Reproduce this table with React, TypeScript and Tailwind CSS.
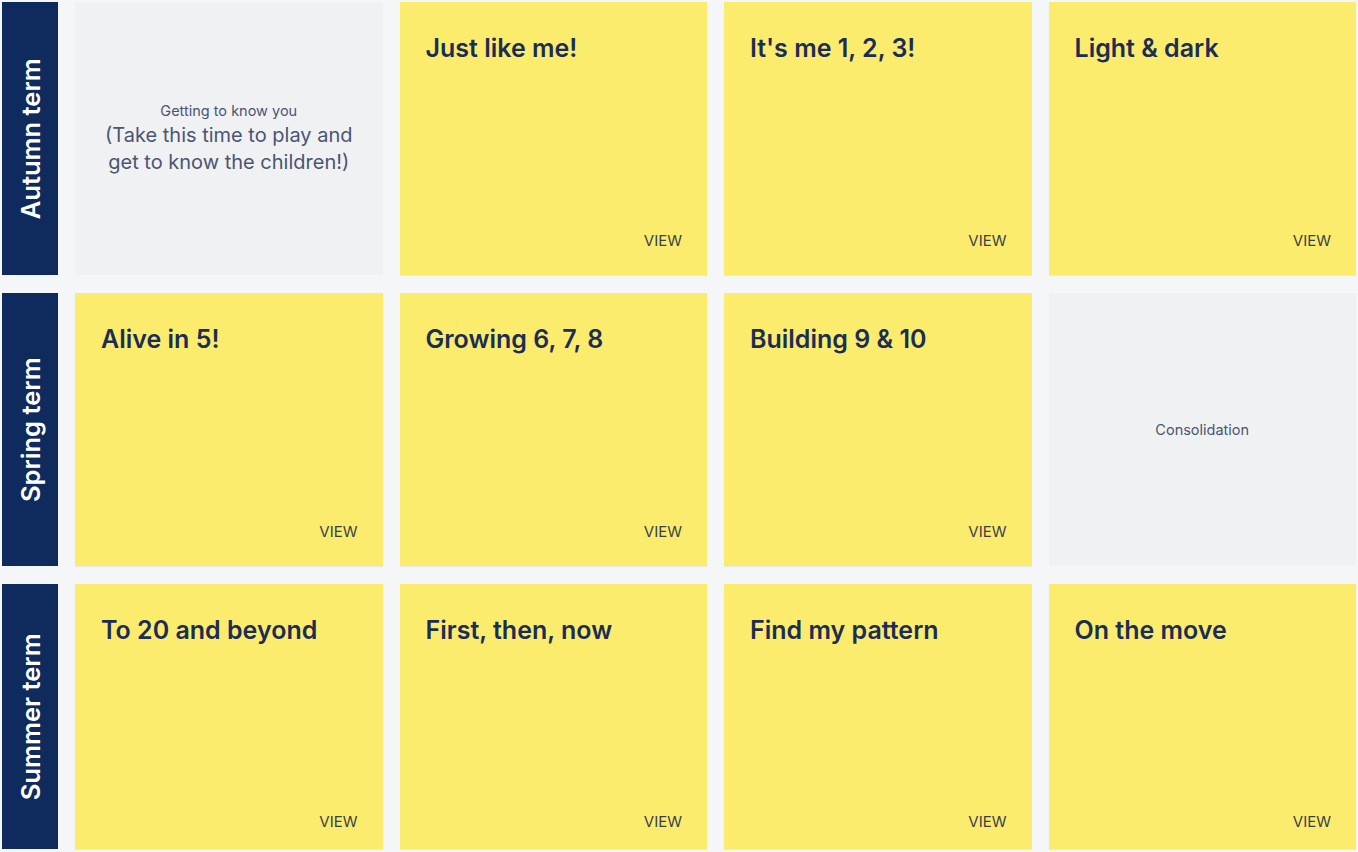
import React from "react";

type Card =
  | { kind: "unit"; title: string }
  | { kind: "note"; small: string; big?: string };

const rows: { term: string; cards: Card[] }[] = [
  {
    term: "Autumn term",
    cards: [
      { kind: "note", small: "Getting to know you", big: "(Take this time to play and get to know the children!)" },
      { kind: "unit", title: "Just like me!" },
      { kind: "unit", title: "It's me 1, 2, 3!" },
      { kind: "unit", title: "Light & dark" },
    ],
  },
  {
    term: "Spring term",
    cards: [
      { kind: "unit", title: "Alive in 5!" },
      { kind: "unit", title: "Growing 6, 7, 8" },
      { kind: "unit", title: "Building 9 & 10" },
      { kind: "note", small: "Consolidation" },
    ],
  },
  {
    term: "Summer term",
    cards: [
      { kind: "unit", title: "To 20 and beyond" },
      { kind: "unit", title: "First, then, now" },
      { kind: "unit", title: "Find my pattern" },
      { kind: "unit", title: "On the move" },
    ],
  },
];

export default function App() {
  return (
    <div
      className="w-[1358px] h-[852px] overflow-hidden bg-[#f4f6f8] px-[2px] pt-[2px] flex flex-col gap-[18px]"
      style={{ fontFamily: "Inter, 'Open Sans', sans-serif" }}
    >
      {rows.map((row, ri) => {
        const last = ri === 2;
        return (
          <div
            key={ri}
            className={`grid grid-cols-[56px_repeat(4,minmax(0,1fr))] gap-[17px] shrink-0 ${last ? "h-[265px]" : "h-[273px]"}`}
          >
            <div className="bg-[#0f2a5c] flex items-center justify-center">
              <span className="-rotate-90 whitespace-nowrap text-white font-semibold text-[25.5px] leading-none">
                {row.term}
              </span>
            </div>
            {row.cards.map((c, ci) =>
              c.kind === "unit" ? (
                <div
                  key={ci}
                  className={`bg-[#fcec6e] flex flex-col justify-between pl-[26px] pr-[25px] pt-[30px] shadow-[0_1px_1px_rgba(0,0,0,0.05)] ${last ? "pb-[16px]" : "pb-[23px]"}`}
                >
                  <div className="text-[#1b2d55] font-semibold text-[25px] leading-[32px]">{c.title}</div>
                  <div className="text-right text-[#3a3f4a] text-[15px]">VIEW</div>
                </div>
              ) : (
                <div
                  key={ci}
                  className="bg-[#f0f1f3] flex flex-col items-center justify-center text-center text-[#4a5570] px-[26px]"
                >
                  <div className="text-[14.5px] leading-[20px]">{c.small}</div>
                  {c.big && <div className="text-[20px] leading-[27px] mt-[1px]">{c.big}</div>}
                </div>
              )
            )}
          </div>
        );
      })}
    </div>
  );
}
